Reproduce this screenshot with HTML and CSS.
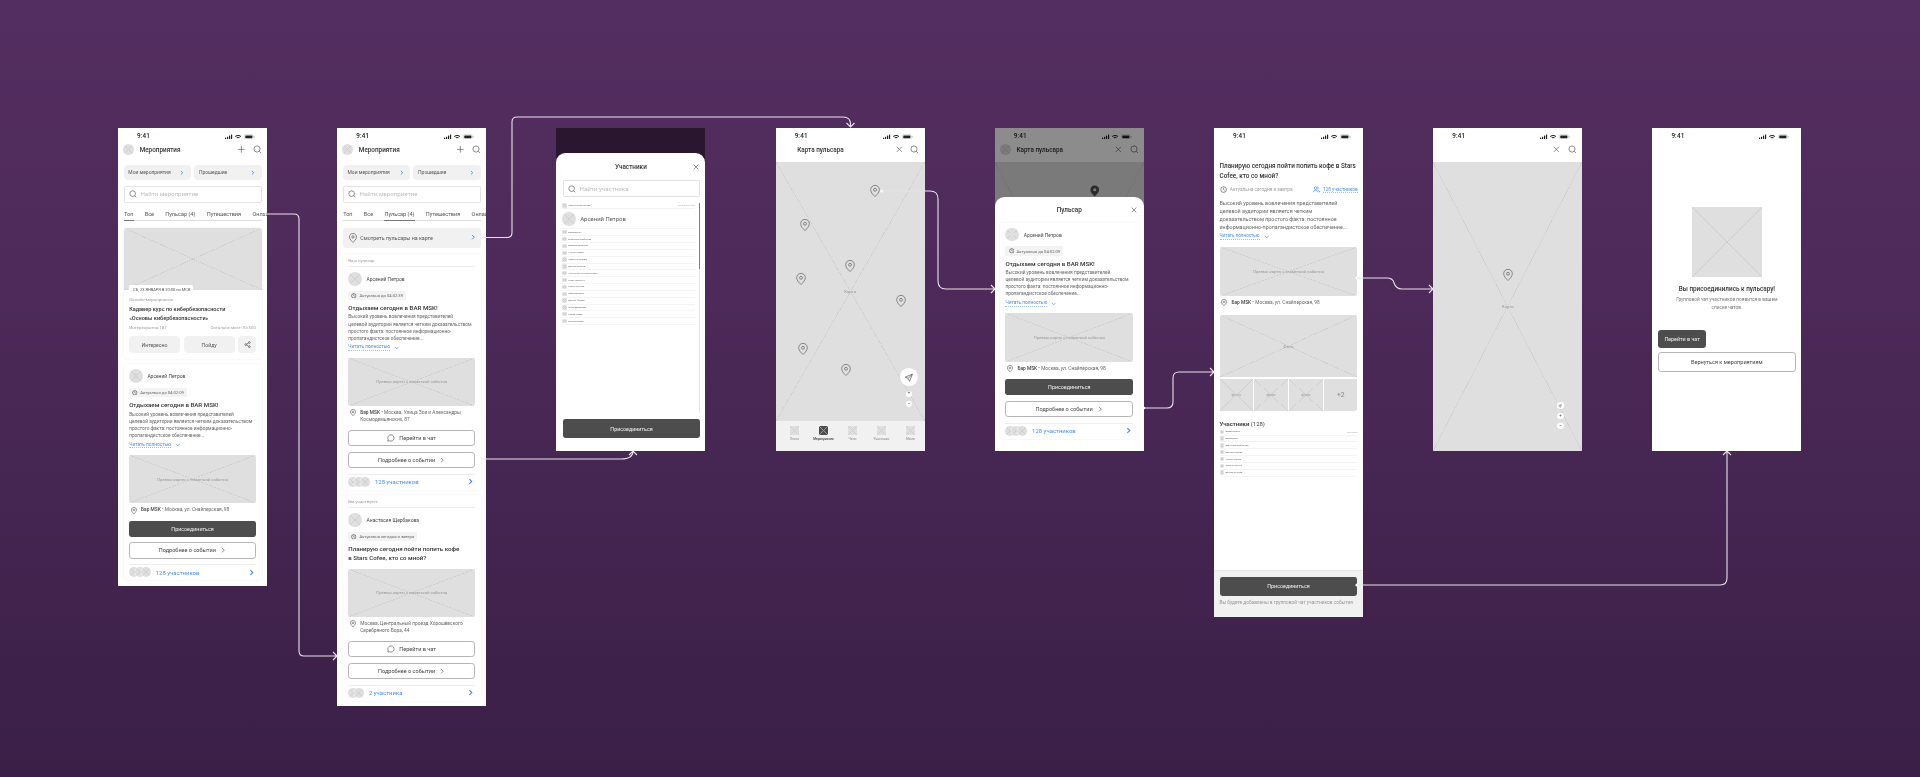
FILE: index.html
```html
<!DOCTYPE html>
<html lang="ru">
<head>
<meta charset="utf-8">
<title>Пульсар — пользовательский сценарий</title>
<link rel="stylesheet" href="styles.css">
</head>
<body>
<svg class="sprite" aria-hidden="true">
  <defs>
    <symbol id="i-search" viewBox="0 0 24 24"><circle cx="11" cy="11" r="8.5"/><path d="M17.2 17.2 22 22"/></symbol>
    <symbol id="i-close" viewBox="0 0 24 24"><path d="M5 5l14 14M19 5L5 19"/></symbol>
    <symbol id="i-plus" viewBox="0 0 24 24"><path d="M12 3v18M3 12h18"/></symbol>
    <symbol id="i-chev" viewBox="0 0 24 24"><path d="M8 4l8 8-8 8"/></symbol>
    <symbol id="i-down" viewBox="0 0 24 24"><path d="M4 8l8 8 8-8"/></symbol>
    <symbol id="i-clock" viewBox="0 0 24 24"><circle cx="12" cy="12" r="9.5"/><path d="M12 6.5V12l3.5 2.5"/></symbol>
    <symbol id="i-pin" viewBox="0 0 24 30"><path d="M12 1.5C5.8 1.5 1.5 6 1.5 12c0 7 6.5 12 10.5 16.5C16 24 22.500 19 22.500 12 22.500 6 18.200 1.500 12 1.500z"/><circle cx="12" cy="12" r="3.500"/></symbol>
    <symbol id="i-pin-solid" viewBox="0 0 24 30"><path d="M12 1C5.500 1 1 5.700 1 12c0 7 6.500 12 11 17 4.500-5 11-10 11-17C23 5.700 18.500 1 12 1zm0 15a4 4 0 1 1 0-8 4 4 0 0 1 0 8z"/></symbol>
    <symbol id="i-share" viewBox="0 0 24 24"><circle cx="18" cy="5" r="3"/><circle cx="6" cy="12" r="3"/><circle cx="18" cy="19" r="3"/><path d="M8.700 10.500l6.600-4M8.700 13.500l6.600 4"/></symbol>
    <symbol id="i-chat" viewBox="0 0 24 24"><path d="M12 2.500a9.500 9.500 0 1 1-4.500 17.900L2.500 21.500l1.100-5A9.500 9.500 0 0 1 12 2.500z"/></symbol>
    <symbol id="i-users" viewBox="0 0 24 24"><circle cx="9" cy="7" r="4.500"/><path d="M1.500 21c0-4.500 3-7 7.500-7s7.500 2.500 7.500 7"/><path d="M15 3a4.500 4.500 0 0 1 0 8M18 14.500c2.700.8 4.500 3 4.500 6.500"/></symbol>
    <symbol id="i-nav" viewBox="0 0 24 24"><path d="M21 3L3 10.500l7.500 3L14 21z"/><path d="M21 3L10.500 13.500"/></symbol>
    <symbol id="i-status" viewBox="0 0 76 14">
      <rect x="0" y="9" width="3" height="4" rx=".8"/><rect x="5" y="7" width="3" height="6" rx=".8"/><rect x="10" y="4" width="3" height="9" rx=".8"/><rect x="15" y="1" width="3" height="12" rx=".8"/>
      <path d="M33 2.500c3 0 5.700 1.100 7.800 3l-1.600 1.800A9.200 9.200 0 0 0 33 5a9.200 9.200 0 0 0-6.200 2.300l-1.600-1.800c2.100-1.900 4.800-3 7.800-3zm0 4.800c1.700 0 3.200.6 4.400 1.700l-1.700 1.800A4 4 0 0 0 33 9.800a4 4 0 0 0-2.700 1l-1.700-1.800A6.500 6.500 0 0 1 33 7.300zm0 4.600l1.900 1.100-1.900 1-1.900-1z"/>
      <rect x="49" y="1.500" width="22" height="11" rx="3" fill="none" stroke="currentColor" opacity=".4"/><rect x="51" y="3.500" width="18" height="7" rx="1.500"/><rect x="72.500" y="5" width="1.500" height="4" rx=".7" opacity=".5"/>
    </symbol>
  </defs>
</svg>

<main class="board">

  <!-- 1. Мероприятия / Топ -->
  <section class="phone pad-b">
    <div class="status"><span>9:41</span><svg class="st"><use href="#i-status"/></svg></div>
    <header class="head"><span class="av av-head"></span><h1>Мероприятия</h1><svg class="ic i22"><use href="#i-plus"/></svg><svg class="ic i22"><use href="#i-search"/></svg></header>
    <div class="chips">
      <div class="chip"><span>Мои мероприятия</span><svg class="ic i14 blue"><use href="#i-chev"/></svg></div>
      <div class="chip"><span>Прошедшие</span><svg class="ic i14 blue"><use href="#i-chev"/></svg></div>
    </div>
    <div class="search"><svg class="ic i20"><use href="#i-search"/></svg><span>Найти мероприятие</span></div>
    <nav class="tabs"><span class="tab on">Топ</span><span class="tab">Все</span><span class="tab">Пульсар (4)</span><span class="tab">Путешествия</span><span class="tab">Онлайн</span></nav>

    <article class="card event">
      <div class="ph ev-img"><span class="date">СБ, 23 ЯНВАРЯ В 20:00 по МСК</span></div>
      <div class="ev-body">
        <p class="muted">Онлайн-мероприятие</p>
        <h2 class="ev-title">Кадавер курс по кибербезопасности<br>«Основы кибербезопасности»</h2>
        <p class="muted split"><span>Интересуются:187</span><span>Осталось мест:10/500</span></p>
        <div class="acts"><span class="act">Интересно</span><span class="act">Пойду</span><span class="act act-s"><svg class="ic i18"><use href="#i-share"/></svg></span></div>
      </div>
    </article>

    <article class="card post">
      <div class="who"><span class="av"></span><span>Арсений Петров</span></div>
      <div class="tag"><svg class="ic i14"><use href="#i-clock"/></svg>Актуально до 04:02:09</div>
      <h2 class="p-title">Отдыхаем сегодня в BAR MSK!</h2>
      <p class="p-text">Высокий уровень вовлечения представителей<br>целевой аудитории является четким доказательством<br>простого факта: постоянное информационно-<br>пропагандистское обеспечение...</p>
      <div class="read"><span>Читать полностью</span><svg class="ic i14"><use href="#i-down"/></svg></div>
      <div class="ph map"><span>Превью карты с геометкой события</span></div>
      <div class="loc"><svg class="ic pin-s"><use href="#i-pin"/></svg><p><b>Бар MSK</b> • Москва, ул. Снайперская, 98</p></div>
      <div class="btn dark">Присоединиться</div>
      <div class="btn line">Подробнее о событии<svg class="ic i16"><use href="#i-chev"/></svg></div>
      <div class="people"><span class="faces"><i class="av"></i><i class="av"></i><i class="av"></i></span><span class="blue-t">128 участников</span><svg class="ic i18 blue"><use href="#i-chev"/></svg></div>
    </article>
  </section>

  <!-- 2. Мероприятия / Пульсар -->
  <section class="phone pad-b">
    <div class="status"><span>9:41</span><svg class="st"><use href="#i-status"/></svg></div>
    <header class="head"><span class="av av-head"></span><h1>Мероприятия</h1><svg class="ic i22"><use href="#i-plus"/></svg><svg class="ic i22"><use href="#i-search"/></svg></header>
    <div class="chips">
      <div class="chip"><span>Мои мероприятия</span><svg class="ic i14 blue"><use href="#i-chev"/></svg></div>
      <div class="chip"><span>Прошедшие</span><svg class="ic i14 blue"><use href="#i-chev"/></svg></div>
    </div>
    <div class="search"><svg class="ic i20"><use href="#i-search"/></svg><span>Найти мероприятие</span></div>
    <nav class="tabs"><span class="tab">Топ</span><span class="tab">Все</span><span class="tab on">Пульсар (4)</span><span class="tab">Путешествия</span><span class="tab">Онлайн</span></nav>

    <div class="maplink"><svg class="ic pin-m"><use href="#i-pin"/></svg><span>Смотреть пульсары на карте</span><svg class="ic i16 blue"><use href="#i-chev"/></svg></div>

    <article class="card post labeled">
      <p class="label">Ваш пульсар</p>
      <div class="who"><span class="av"></span><span>Арсений Петров</span></div>
      <div class="tag"><svg class="ic i14"><use href="#i-clock"/></svg>Актуально до 04:02:39</div>
      <h2 class="p-title">Отдыхаем сегодня в BAR MSK!</h2>
      <p class="p-text">Высокий уровень вовлечения представителей<br>целевой аудитории является четким доказательством<br>простого факта: постоянное информационно-<br>пропагандистское обеспечение...</p>
      <div class="read"><span>Читать полностью</span><svg class="ic i14"><use href="#i-down"/></svg></div>
      <div class="ph map"><span>Превью карты с геометкой события</span></div>
      <div class="loc two"><svg class="ic pin-s"><use href="#i-pin"/></svg><p><b>Бар MSK</b> • Москва, Улица Зои и Александры<br>Космодемьянских, 87</p></div>
      <div class="btn line"><svg class="ic i20"><use href="#i-chat"/></svg>Перейти в чат</div>
      <div class="btn line">Подробнее о событии<svg class="ic i16"><use href="#i-chev"/></svg></div>
      <div class="people"><span class="faces"><i class="av"></i><i class="av"></i><i class="av"></i></span><span class="blue-t">128 участников</span><svg class="ic i18 blue"><use href="#i-chev"/></svg></div>
    </article>

    <article class="card post labeled">
      <p class="label">Вы участвуете</p>
      <div class="who"><span class="av"></span><span>Анастасия Щербакова</span></div>
      <div class="tag"><svg class="ic i14"><use href="#i-clock"/></svg>Актуальна сегодня и завтра</div>
      <h2 class="p-title two">Планирую сегодня пойти попить кофе<br>в Stars Cofee, кто со мной?</h2>
      <div class="ph map"><span>Превью карты с геометкой события</span></div>
      <div class="loc two"><svg class="ic pin-s"><use href="#i-pin"/></svg><p>Москва, Центральный проезд Хорошёвского<br>Серебряного Бора, 44</p></div>
      <div class="btn line"><svg class="ic i20"><use href="#i-chat"/></svg>Перейти в чат</div>
      <div class="btn line">Подробнее о событии<svg class="ic i16"><use href="#i-chev"/></svg></div>
      <div class="people"><span class="faces"><i class="av"></i><i class="av"></i></span><span class="blue-t">2 участника</span><svg class="ic i18 blue"><use href="#i-chev"/></svg></div>
    </article>
  </section>

  <!-- 3. Участники -->
  <section class="phone screen dark-top">
    <div class="sheet-flow">
      <div class="sheet-head"><span></span><h2>Участники</h2><svg class="ic i20"><use href="#i-close"/></svg></div>
      <div class="search s-sheet"><svg class="ic i20"><use href="#i-search"/></svg><span>Найти участника</span></div>
      <div class="plist">
        <div class="scroll"></div>
        <div class="prow"><i class="av"></i><span>Кристина Мясникова</span><em>участвует в событии</em></div>
        <div class="prow big"><i class="av"></i><span>Арсений Петров</span></div>
        <div class="prow"><i class="av"></i><span>Артем Дугин</span></div>
        <div class="prow"><i class="av"></i><span>Анастасия Щербакова</span></div>
        <div class="prow"><i class="av"></i><span>Валерия Смирнова</span></div>
        <div class="prow"><i class="av"></i><span>Ксения Львова</span></div>
        <div class="prow"><i class="av"></i><span>Светлана Львовна</span></div>
        <div class="prow"><i class="av"></i><span>Даниил Игнатов</span></div>
        <div class="prow"><i class="av"></i><span>Константин Константинович</span></div>
        <div class="prow"><i class="av"></i><span>Игорь Петренко</span></div>
        <div class="prow"><i class="av"></i><span>Роман Соколов</span></div>
        <div class="prow"><i class="av"></i><span>Ярослав Белов</span></div>
        <div class="prow"><i class="av"></i><span>Даниил Фролов</span></div>
        <div class="prow"><i class="av"></i><span>Юлия Дмитриева</span></div>
        <div class="prow"><i class="av"></i><span>Сергей Попов</span></div>
        <div class="prow"><i class="av"></i><span>Евгений Орлов</span></div>
      </div>
      <div class="sheet-foot"><div class="btn dark tall">Присоединиться</div></div>
    </div>
  </section>

  <!-- 4. Карта пульсара -->
  <section class="phone screen">
    <div class="status"><span>9:41</span><svg class="st"><use href="#i-status"/></svg></div>
    <header class="head mapbar"><h1>Карта пульсара</h1><svg class="ic i22"><use href="#i-close"/></svg><svg class="ic i22"><use href="#i-search"/></svg></header>
    <div class="ph fullmap">
      <span>Карта</span>
      <svg class="ic mpin a1"><use href="#i-pin"/></svg>
      <svg class="ic mpin a2"><use href="#i-pin"/></svg>
      <svg class="ic mpin a3"><use href="#i-pin"/></svg>
      <svg class="ic mpin a4"><use href="#i-pin"/></svg>
      <svg class="ic mpin a5"><use href="#i-pin"/></svg>
      <svg class="ic mpin a6"><use href="#i-pin"/></svg>
      <svg class="ic mpin a7"><use href="#i-pin"/></svg>
      <div class="ctrl c-main">
        <b class="round big-r"><svg class="ic i24"><use href="#i-nav"/></svg></b>
        <b class="round">+</b>
        <b class="round">−</b>
      </div>
    </div>
    <nav class="tabbar">
      <div class="tb"><i class="ph tb-i"></i><span>Лента</span></div>
      <div class="tb tb-on"><i class="ph tb-i"></i><span>Мероприятия</span></div>
      <div class="tb"><i class="ph tb-i"></i><span>Чаты</span></div>
      <div class="tb"><i class="ph tb-i"></i><span>Участники</span></div>
      <div class="tb"><i class="ph tb-i"></i><span>Меню</span></div>
    </nav>
  </section>

  <!-- 5. Пульсар в шторке -->
  <section class="phone screen">
    <div class="status"><span>9:41</span><svg class="st"><use href="#i-status"/></svg></div>
    <header class="head head-gap"><span class="av av-head"></span><h1>Карта пульсара</h1><svg class="ic i22"><use href="#i-close"/></svg><svg class="ic i22"><use href="#i-search"/></svg></header>
    <div class="ph fullmap grow"></div>
    <div class="scrim"></div>
    <svg class="solid-pin"><use href="#i-pin-solid"/></svg>
    <div class="sheet-over">
      <div class="sheet-head"><span></span><h2>Пульсар</h2><svg class="ic i20"><use href="#i-close"/></svg></div>
      <article class="card post in-sheet">
        <div class="who"><span class="av"></span><span>Арсений Петров</span></div>
        <div class="tag"><svg class="ic i14"><use href="#i-clock"/></svg>Актуально до 04:02:09</div>
        <h2 class="p-title">Отдыхаем сегодня в BAR MSK!</h2>
        <p class="p-text">Высокий уровень вовлечения представителей<br>целевой аудитории является четким доказательством<br>простого факта: постоянное информационно-<br>пропагандистское обеспечение...</p>
        <div class="read"><span>Читать полностью</span><svg class="ic i14"><use href="#i-down"/></svg></div>
        <div class="ph map"><span>Превью карты с геометкой события</span></div>
        <div class="loc"><svg class="ic pin-s"><use href="#i-pin"/></svg><p><b>Бар MSK</b> • Москва, ул. Снайперская, 98</p></div>
        <div class="btn dark">Присоединиться</div>
        <div class="btn line">Подробнее о событии<svg class="ic i16"><use href="#i-chev"/></svg></div>
        <div class="people"><span class="faces"><i class="av"></i><i class="av"></i><i class="av"></i></span><span class="blue-t">128 участников</span><svg class="ic i18 blue"><use href="#i-chev"/></svg></div>
      </article>
    </div>
  </section>

  <!-- 6. Подробнее о событии -->
  <section class="phone long">
    <div class="status"><span>9:41</span><svg class="st"><use href="#i-status"/></svg></div>
    <div class="detail">
      <h2 class="d-title">Планирую сегодня пойти попить кофе в Stars<br>Cofee, кто со мной?</h2>
      <div class="d-meta"><svg class="ic i18"><use href="#i-clock"/></svg><span class="grow-t">Актуальна сегодня и завтра</span><svg class="ic i18 blue thin"><use href="#i-users"/></svg><span class="d-count">128 участников</span></div>
      <p class="d-text">Высокий уровень вовлечения представителей<br>целевой аудитории является четким<br>доказательством простого факта: постоянное<br>информационно-пропагандистское обеспечение...</p>
      <div class="read d-read"><span>Читать полностью</span><svg class="ic i14"><use href="#i-down"/></svg></div>
      <div class="ph map d-map"><span>Превью карты с геометкой события</span></div>
      <div class="loc d-loc"><svg class="ic pin-s"><use href="#i-pin"/></svg><p><b>Бар MSK</b> • Москва, ул. Снайперская, 98</p></div>
      <div class="ph photo"><span>Фото</span></div>
      <div class="thumbs">
        <div class="ph"><span>фото</span></div>
        <div class="ph"><span>фото</span></div>
        <div class="ph"><span>фото</span></div>
        <div class="more">+2</div>
      </div>
      <h3 class="d-sub"><b>Участники</b> (128)</h3>
      <div class="plist d-list">
        <div class="prow"><i class="av"></i><span>Артем Петров</span><em>организатор</em></div>
        <div class="prow"><i class="av"></i><span>Артем Дугин</span></div>
        <div class="prow"><i class="av"></i><span>Анастасия Щербакова</span></div>
        <div class="prow"><i class="av"></i><span>Валерия Львова</span></div>
        <div class="prow"><i class="av"></i><span>Ксения Львова</span></div>
        <div class="prow"><i class="av"></i><span>Татьяна Ильина</span></div>
        <div class="prow"><i class="av"></i><span>Даниил Игнатов</span></div>
      </div>
    </div>
    <footer class="panel"><div class="btn dark tall">Присоединиться</div><p>Вы будете добавлены в групповой чат участников события</p></footer>
  </section>

  <!-- 7. Выбор на карте -->
  <section class="phone screen">
    <div class="status"><span>9:41</span><svg class="st"><use href="#i-status"/></svg></div>
    <header class="head mapbar"><h1></h1><svg class="ic i22"><use href="#i-close"/></svg><svg class="ic i22"><use href="#i-search"/></svg></header>
    <div class="ph fullmap grow">
      <span class="lab-low">Карта</span>
      <svg class="ic mpin b1"><use href="#i-pin"/></svg>
      <div class="ctrl c-small">
        <b class="round"><svg class="ic i10"><use href="#i-nav"/></svg></b>
        <b class="round">+</b>
        <b class="round">−</b>
      </div>
    </div>
  </section>

  <!-- 8. Успех -->
  <section class="phone screen done">
    <div class="status"><span>9:41</span><svg class="st"><use href="#i-status"/></svg></div>
    <div class="ph hero"></div>
    <h2 class="done-t">Вы присоединились к пульсару!</h2>
    <p class="done-s">Групповой чат участников появится в вашем<br>списке чатов.</p>
    <div class="btn dark tall fit">Перейти в чат</div>
    <div class="btn line back">Вернуться к мероприятиям</div>
  </section>
</main>

<svg class="links" viewBox="0 0 1920 777" aria-hidden="true">
  <g class="link-dots">
    <circle cx="479" cy="237.500" r="1.600"/><circle cx="882" cy="191" r="1.600"/><circle cx="1357" cy="278" r="1.600"/><circle cx="1357" cy="585" r="1.600"/><circle cx="481" cy="459" r="1.300"/><circle cx="1144" cy="408" r="1.300"/>
  </g>
  <g class="link-lines">
    <path d="M264 214H294Q299 214 299 219V651Q299 656 304 656H337M333 652L337 656L333 660"/>
    <path d="M479 237.500H507Q512 237.500 512 232.500V122Q512 117 517 117H843Q850.500 117 850.500 124V127M846.500 123L850.500 127L854.500 123"/>
    <path d="M481 459H621Q633 459 633 451M629 455L633 451L637 455"/>
    <path d="M882 191H930Q938 191 938 199V281Q938 289 946 289H995M991 285L995 289L991 293"/>
    <path d="M1144 408H1167Q1173 408 1173 402V378Q1173 372 1179 372H1214M1210 368L1214 372L1210 376"/>
    <path d="M1357 278H1387Q1393 278 1394 283Q1396 289 1402 289H1433M1429 285L1433 289L1429 293"/>
    <path d="M1357 585H1720Q1727 585 1727 578V451M1723 455L1727 451L1731 455"/>
  </g>
</svg>
</body>
</html>
```

FILE: styles.css
```css
* { box-sizing: border-box; margin: 0; padding: 0; }
html, body { width: 1920px; height: 777px; overflow: hidden; }
body {
  position: relative;
  background: linear-gradient(180deg, #532e60 0%, #4f2b5b 30%, #3a1f47 100%);
  font-family: Roboto, "Liberation Sans", sans-serif;
}
.sprite { width: 0; height: 0; position: absolute; }
i, em { font-style: normal; }

.board { display: flex; align-items: flex-start; gap: 70.14px; padding: 128px 0 0 118px; }

.phone {
  zoom: .3975;
  position: relative;
  flex: none;
  width: 375px;
  display: flex;
  flex-direction: column;
  overflow: hidden;
  background: #fff;
  color: #333;
  font-size: 12px;
  filter: blur(.7px);
}
.pad-b { padding-bottom: 14px; }
.screen { height: 812px; }
.long { height: 1231px; }

/* icons */
.ic { fill: none; stroke: currentColor; stroke-width: 1.8; flex: none; color: #555; }
.i10 { width: 10px; height: 10px; stroke-width: 2.4; }
.i14 { width: 14px; height: 14px; stroke-width: 3; }
.i16 { width: 16px; height: 16px; stroke-width: 2.6; }
.i18 { width: 18px; height: 18px; stroke-width: 2.3; }
.i20 { width: 20px; height: 20px; stroke-width: 2; }
.i22 { width: 22px; height: 22px; stroke-width: 1.8; }
.i24 { width: 24px; height: 24px; }
.pin-s { width: 15px; height: 18px; stroke-width: 2.6; }
.pin-m { width: 20px; height: 25px; stroke-width: 2; }
.ic.blue { color: #3f88ea; stroke-width: 3.6; }
.ic.blue.thin { stroke-width: 2.3; }

/* common top */
.status { align-self: stretch; height: 40px; padding: 2px 30px 0 48px; display: flex; align-items: center; justify-content: space-between; font-size: 16px; font-weight: 500; color: #222; letter-spacing: .3px; }
.st { width: 76px; height: 14px; color: #222; fill: #222; }
.head { height: 29px; padding: 0 14px 0 13px; display: flex; align-items: center; gap: 17px; }
.head h1 { flex: 1; font-size: 16px; font-weight: 500; color: #333; margin-left: -3.500px; }
.head-gap { margin-bottom: 16px; }
.mapbar { padding-left: 54.500px; margin-bottom: 16px; }
.mapbar h1 { margin-left: 0; }

/* wireframe placeholder */
.ph {
  display: flex;
  align-items: center;
  justify-content: center;
  color: #9a9a9a;
  background:
    linear-gradient(to top right, transparent calc(50% - .8px), #cfcfcf calc(50% - .8px), #cfcfcf calc(50% + .8px), transparent calc(50% + .8px)),
    linear-gradient(to bottom right, transparent calc(50% - .8px), #cfcfcf calc(50% - .8px), #cfcfcf calc(50% + .8px), transparent calc(50% + .8px)),
    #dfdfdf;
}
.av {
  display: block;
  flex: none;
  width: 35px;
  height: 35px;
  border-radius: 50%;
  background:
    linear-gradient(to top right, transparent calc(50% - .7px), #cfcfcf calc(50% - .7px), #cfcfcf calc(50% + .7px), transparent calc(50% + .7px)),
    linear-gradient(to bottom right, transparent calc(50% - .7px), #cfcfcf calc(50% - .7px), #cfcfcf calc(50% + .7px), transparent calc(50% + .7px)),
    #dfdfdf;
}
.av-head { width: 28px; height: 28px; }

.chips { display: flex; gap: 8px; margin: 23px 14px 0; }
.chip { flex: 1; height: 39px; padding: 0 15px 0 12px; display: flex; align-items: center; justify-content: space-between; background: #f1f1f1; border-radius: 10px; font-size: 12.500px; color: #555; }
.search { display: flex; align-items: center; gap: 9px; height: 43px; margin: 14px 14px 0; padding: 0 11px; border: 1.500px solid #e2e2e2; border-radius: 4px; font-size: 15.500px; color: #bdbdbd; }
.tabs { display: flex; gap: 26.500px; height: 27px; margin: 18px 14px 0; border-bottom: 1.500px solid #dedede; white-space: nowrap; font-size: 14px; color: #555; }
.tab { height: 27px; padding: 2px 1px 0; }
.tab.on { border-bottom: 1.500px solid #777; }

/* cards */
.card { margin: 18px 14px 0; background: #fff; border-radius: 8px; box-shadow: 0 0 5px rgba(0, 0, 0, .09); }
.post { margin-top: 12.500px; padding: 11.500px 14px 8.500px; }
.ev-img { position: relative; height: 158px; border-radius: 8px 8px 0 0; }
.date { position: absolute; left: 14px; top: 145px; height: 21px; padding: 0 8px 0 10px; display: flex; align-items: center; background: #fff; border-radius: 4px; font-size: 10px; color: #555; white-space: nowrap; }
.ev-body { padding: 17px 14px 17px; }
.muted { font-size: 11px; line-height: 14px; color: #a0a0a0; }
.ev-title { margin: 6.500px 0; font-size: 14px; line-height: 21px; font-weight: 500; color: #333; }
.split { display: flex; justify-content: space-between; }
.acts { display: flex; gap: 10px; margin-top: 15.500px; }
.act { flex: 1; height: 41px; display: flex; align-items: center; justify-content: center; background: #f1f1f1; border-radius: 10px; font-size: 13px; color: #555; }
.act-s { flex: none; width: 44px; }

.labeled { margin-top: 14px; padding-top: 10px; }
.maplink + .labeled { margin-top: 17px; }
.label { height: 22px; line-height: 14px; font-size: 11px; color: #a0a0a0; border-bottom: 1px solid #eee; margin-bottom: 12px; }
.who { display: flex; align-items: center; gap: 11px; font-size: 12.500px; color: #444; }
.tag { display: inline-flex; align-items: center; gap: 6px; height: 24px; margin-top: 12.500px; padding: 0 8px; background: #f3f3f3; border-radius: 3px; font-size: 10.500px; color: #666; white-space: nowrap; vertical-align: top; }
.p-title { margin-top: 9px; font-size: 15.500px; line-height: 21px; font-weight: 500; color: #333; white-space: nowrap; }
.p-title.two { font-size: 15.500px; line-height: 22px; margin-bottom: 16px; }
.p-text { margin-top: 3.500px; font-size: 12px; line-height: 17.700px; color: #666; white-space: nowrap; }
.read { display: flex; align-items: center; gap: 10px; height: 16px; margin-top: 7.500px; font-size: 12px; color: #4b8fe8; }
.read span { border-bottom: 1px dotted #9cc2f2; line-height: 14px; }
.read .ic { color: #4b8fe8; }
.map { height: 122px; margin-top: 17px; border-radius: 6px; font-size: 10.500px; }
.p-title.two + .map { margin-top: 0; }
.loc { display: flex; gap: 10px; margin-top: 7px; padding-left: 5px; font-size: 12.200px; line-height: 18.500px; color: #666; white-space: nowrap; }
.loc b { font-weight: 500; color: #444; }
.loc .ic { margin-top: 1px; }
.loc.two { margin-top: 6px; }
.btn { height: 41px; margin-top: 14px; display: flex; align-items: center; justify-content: center; gap: 10px; border-radius: 8px; font-size: 14px; }
.btn.dark { height: 40px; margin-top: 18px; background: #4d4d4d; color: #f2f2f2; border-radius: 6px; font-size: 13.500px; }
.btn.line { border: 1.500px solid #b5b5b5; color: #444; background: #fff; }
.loc.two + .btn.line { margin-top: 17px; }
.btn.tall { height: 48px; margin-top: 0; }
.people { display: flex; align-items: center; height: 31px; margin-top: 15px; padding-top: 5px; border-top: 1px solid #eee; font-size: 15px; }
.faces { display: flex; margin-right: 12px; }
.faces .av { width: 25px; height: 25px; margin-right: -10px; box-shadow: 0 0 0 1px #fff; }
.faces .av:last-child { margin-right: 0; }
.blue-t { flex: 1; color: #4b8fe8; }
.people .ic { margin-right: 3px; }
.maplink { display: flex; align-items: center; gap: 9px; height: 50px; margin: 18px 14px 0; padding: 0 12px 0 15px; background: #f1f1f1; border-radius: 8px; font-size: 13.500px; color: #555; }
.maplink span { flex: 1; }

/* sheets */
.dark-top { background: #2a172f; padding-top: 64px; }
.sheet-flow { flex: 1; min-height: 0; display: flex; flex-direction: column; background: #fff; border-radius: 24px 24px 0 0; }
.sheet-head { display: grid; grid-template-columns: 1fr auto 1fr; align-items: center; height: 66px; padding: 0 15px; }
.sheet-head h2 { font-size: 16px; font-weight: 500; color: #333; }
.sheet-head .ic { justify-self: end; }
.s-sheet { margin: 2px 13px 0 16px; height: 42px; }
.plist { position: relative; flex: 1; margin: 13.500px 14px 0 15px; padding-right: 13px; }
.scroll { position: absolute; top: 0; bottom: 0; right: 0; width: 2.500px; background: linear-gradient(180deg, #808080 0, #808080 167px, #e6e6e6 167px, #e6e6e6 100%); }
.prow { display: flex; align-items: center; gap: 4px; height: 17.200px; border-bottom: 1px solid #f4f4f4; font-size: 5.500px; color: #666; white-space: nowrap; }
.prow .av { width: 11px; height: 11px; }
.prow span { flex: 1; }
.prow em { font-size: 4.500px; color: #aaa; }
.prow.big { height: 50.500px; gap: 10px; font-size: 15px; color: #555; }
.prow.big .av { width: 35px; height: 35px; }
.sheet-foot { padding: 16px 13px 32px 16px; }
.sheet-over { position: absolute; left: 0; right: 0; top: 173px; bottom: 0; background: #fff; border-radius: 24px 24px 0 0; }
.in-sheet { margin: 0 13px; }
.scrim { position: absolute; inset: 0; background: rgba(0, 0, 0, .45); }
.solid-pin { position: absolute; left: 239px; top: 143px; width: 24px; height: 30px; fill: #2b2b2b; }

/* map */
.fullmap { position: relative; height: 652px; font-size: 11px; }
.grow { flex: 1; }
.mpin { position: absolute; width: 25px; height: 32px; stroke-width: 1.600; color: #5a5a5a; transform: translate(-50%, -50%); }
.a1 { left: 251px; top: 73px; }
.a2 { left: 73px; top: 159px; }
.a3 { left: 187px; top: 263px; }
.a4 { left: 65px; top: 295px; }
.a5 { left: 314.500px; top: 350px; }
.a6 { left: 70px; top: 470px; }
.a7 { left: 177px; top: 523px; }
.b1 { left: 188px; top: 284px; }
.ctrl { position: absolute; display: flex; flex-direction: column; align-items: center; }
.c-main { right: 17px; top: 520px; gap: 10.500px; }
.c-small { right: 47px; top: 605.500px; gap: 10px; }
.round { display: flex; align-items: center; justify-content: center; width: 16px; height: 16px; border-radius: 50%; background: #fff; font-size: 11px; line-height: 1; color: #555; font-weight: 700; }
.big-r { width: 45px; height: 45px; }
.tabbar { flex: 1; display: grid; grid-template-columns: repeat(5, 73px); padding: 13px 0 0 11px; background: #f1f1f1; }
.tb { display: flex; flex-direction: column; align-items: center; gap: 5px; font-size: 8px; color: #888; white-space: nowrap; }
.tb-i { width: 22px; height: 22px; border-radius: 2px; background-color: #dfdfdf; }
.tb-on { color: #444; font-weight: 500; }
.tb-on .tb-i {
  background:
    linear-gradient(to top right, transparent calc(50% - .8px), #9a9a9a calc(50% - .8px), #9a9a9a calc(50% + .8px), transparent calc(50% + .8px)),
    linear-gradient(to bottom right, transparent calc(50% - .8px), #9a9a9a calc(50% - .8px), #9a9a9a calc(50% + .8px), transparent calc(50% + .8px)),
    #4d4d4d;
}

/* detail */
.detail { flex: 1; padding: 0 14px; }
.d-title { margin-top: 46.500px; font-size: 16px; line-height: 23px; font-weight: 500; color: #333; white-space: nowrap; }
.d-meta { display: flex; align-items: center; gap: 6px; height: 18px; margin-top: 13.500px; font-size: 12px; color: #a0a0a0; }
.grow-t { flex: 1; margin-left: 2px; }
.d-count { color: #4b8fe8; border-bottom: 1px dotted #9cc2f2; margin-right: -1px; }
.d-text { margin-top: 14.500px; font-size: 13.500px; line-height: 20.500px; color: #666; white-space: nowrap; }
.d-read { margin-top: 4.500px; font-size: 11.500px; }
.d-map { height: 123.500px; margin-top: 19px; }
.d-loc { margin-top: 6px; }
.photo { height: 156.500px; margin-top: 22px; border-radius: 6px 6px 0 0; font-size: 11px; }
.thumbs { display: grid; grid-template-columns: repeat(4, 1fr); gap: 4px; height: 79.500px; margin-top: 4.500px; font-size: 10px; }
.more { display: flex; align-items: center; justify-content: center; background: #dfdfdf; border-radius: 0 0 6px 0; font-size: 17px; color: #888; }
.d-sub { margin-top: 23px; font-size: 15px; line-height: 20px; font-weight: 400; color: #444; }
.d-sub b { font-weight: 700; }
.d-list { margin: 3px 0 0; padding-right: 0; }
.panel { height: 118px; padding: 13px 14px 0; background: #f1f1f1; border-top: 1px solid #e6e6e6; }
.panel p { margin-top: 10px; font-size: 12px; line-height: 16px; color: #999; white-space: nowrap; }

/* success */
.done { align-items: center; }
.hero { width: 176px; height: 176px; margin-top: 158px; }
.done-t { margin-top: 23px; font-size: 16px; line-height: 20px; font-weight: 500; color: #333; }
.done-s { margin-top: 5px; font-size: 12px; line-height: 20px; color: #777; text-align: center; }
.btn.fit { width: 122px; height: 47px; margin: 45px 0 0 14px; align-self: flex-start; border-radius: 8px; }
.back { align-self: stretch; height: 50px !important; margin: 9px 14px 0 !important; }

/* connectors */
.links { position: absolute; left: 0; top: 0; width: 1920px; height: 777px; pointer-events: none; }
.link-lines path { fill: none; stroke: #e8e2ec; stroke-width: 1.100; }
.link-dots circle { fill: #fff; }
```
